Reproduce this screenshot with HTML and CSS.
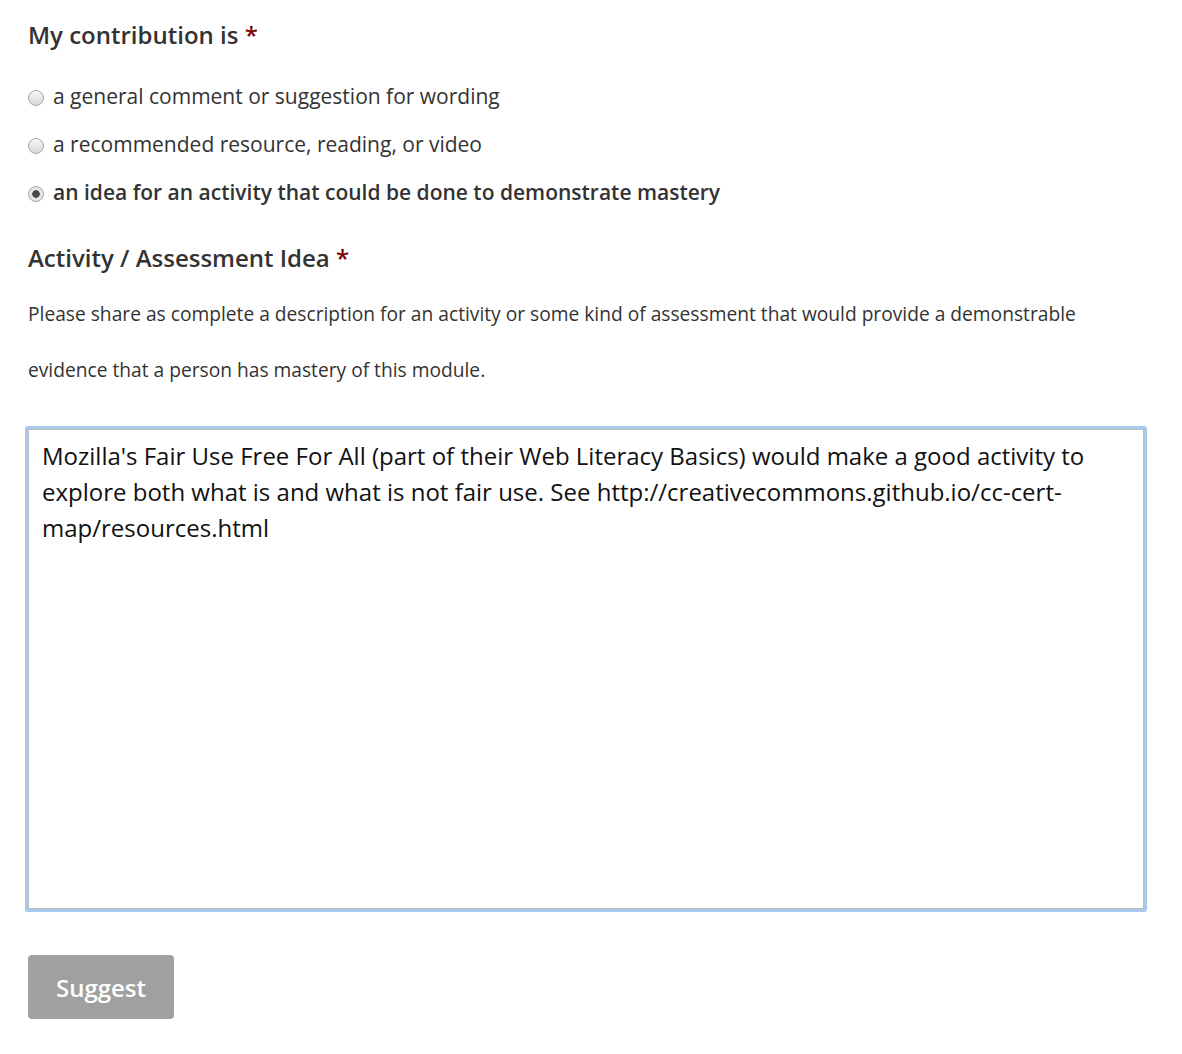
FILE: index.html
```html
<!DOCTYPE html>
<html>
<head>
<meta charset="utf-8">
<link rel="stylesheet" href="styles.css">
</head>
<body>
<form class="form">
  <h2 class="field-title">My contribution is <span class="req">*</span></h2>
  <div class="radios">
    <label class="radio"><span class="dot"></span>a general comment or suggestion for wording</label>
    <label class="radio"><span class="dot"></span>a recommended resource, reading, or video</label>
    <label class="radio checked"><span class="dot on"></span>an idea for an activity that could be done to demonstrate mastery</label>
  </div>
  <h2 class="field-title second">Activity / Assessment Idea <span class="req">*</span></h2>
  <p class="desc">Please share as complete a description for an activity or some kind of assessment that would provide a demonstrable evidence that a person has mastery of this module.</p>
  <textarea class="idea">Mozilla's Fair Use Free For All (part of their Web Literacy Basics) would make a good activity to explore both what is and what is not fair use. See http://creativecommons.github.io/cc-cert-map/resources.html</textarea>
  <div class="actions"><button type="button" class="btn">Suggest</button></div>
</form>
</body>
</html>
```
FILE: styles.css
```css
html, body { margin: 0; padding: 0; background: #fff; }
body { font-family: "Open Sans", "Liberation Sans", sans-serif; color: #333; }
.form { padding: 17px 35px 0 28px; }
.field-title { font-size: 24px; font-weight: 600; margin: 0; line-height: 36px; color: #333; }
.req { color: #800000; }
.radios { display: flex; flex-direction: column; margin-top: 19px; }
.radio { display: flex; align-items: center; font-size: 21px; line-height: 48px; height: 48px; color: #333; }
.radio.checked { font-weight: 600; }
.dot { width: 16px; height: 16px; border-radius: 50%; border: 1px solid #a9a9a9; background: linear-gradient(#f6f6f6, #d8d8d8); margin-right: 9px; box-sizing: border-box; flex: none; position: relative; top: 2px; }
.dot.on { background: radial-gradient(circle, #4a4a4a 0 3.5px, #e4e4e4 4px); }
.second { margin-top: 24px; }
.desc { font-size: 19.2px; line-height: 56px; margin: 10px 0 0; color: #333; max-width: 1119px; }
.idea { display: block; box-sizing: border-box; width: 1116px; height: 480px; margin-top: 31px; border: 1px solid #bbb; box-shadow: 0 0 0 3px #a9c9ec; border-radius: 1px; padding: 8px 13px; font-family: "Open Sans", "Liberation Sans", sans-serif; font-size: 24px; line-height: 36px; color: #111; resize: none; outline: none; }
.actions { margin-top: 46px; }
.btn { width: 146px; height: 64px; background: #a0a0a0; color: #fff; border: none; border-radius: 4px; font-family: "Open Sans", "Liberation Sans", sans-serif; font-size: 24px; font-weight: 600; padding: 0; }
```
